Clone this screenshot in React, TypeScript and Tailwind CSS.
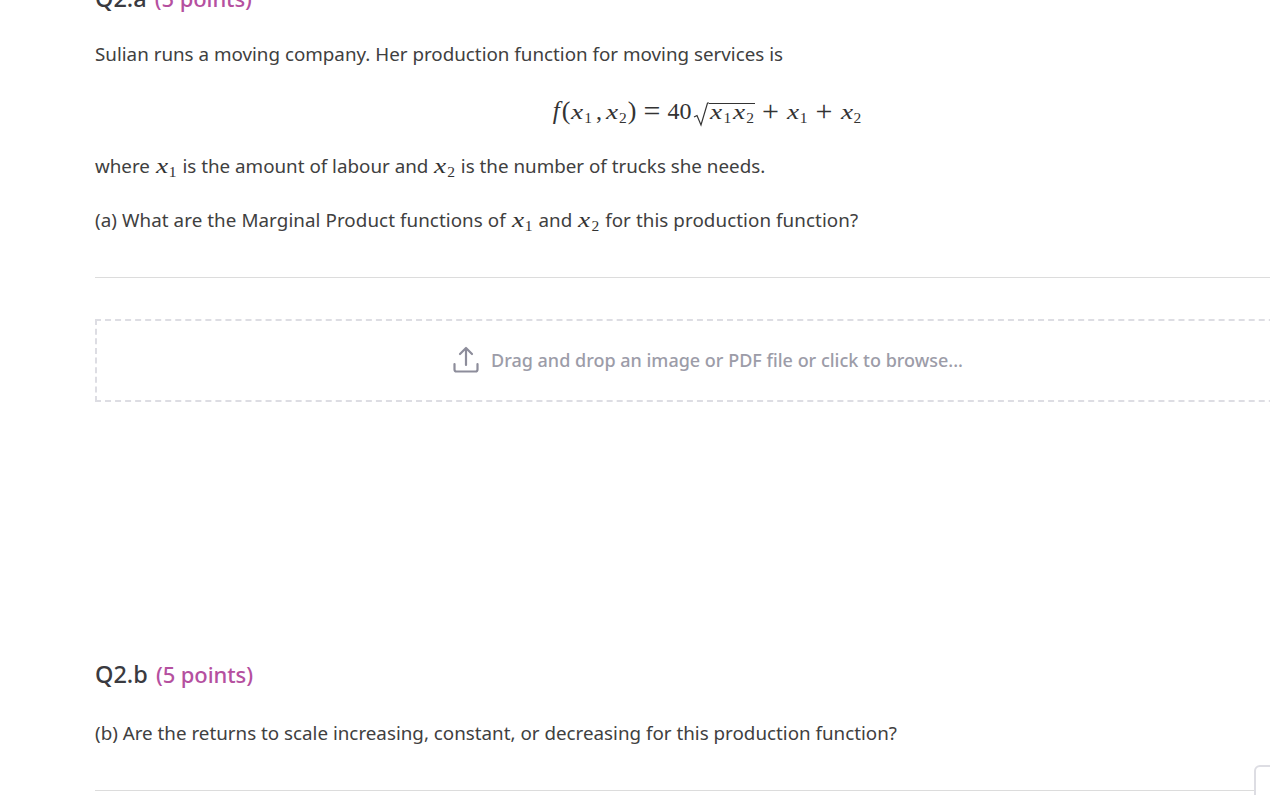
import React from 'react';

function X({ n }: { n: number }) {
  return (
    <span className="inline-block leading-none mx-[1px] font-['Liberation_Serif',serif] text-[#333]">
      <i className="inline-block w-[13px] origin-left scale-x-[1.3] text-[21px]">x</i>
      <span className="relative top-[4px] text-[15.5px]">{'' + n}</span>
    </span>
  );
}

function Heading({ label, points }: { label: string; points: string }) {
  return (
    <h2 className="h-[36px] leading-[36px] text-[23.5px] font-medium text-[#3a3a40]">
      {label} <span className="ml-[2px] text-[22px] tracking-[-0.1px] text-[#b5509f]">{points}</span>
    </h2>
  );
}

export default function App() {
  return (
    <div className="relative h-[795px] w-[1270px] overflow-hidden bg-white text-[18.8px] leading-[28px] text-[#404040] font-['Noto_Sans','Open_Sans',sans-serif]">
      <div className="w-[1300px] pl-[95px] -mt-[20px]">
        <Heading label="Q2.a" points="(5 points)" />

        <p className="mt-[24px]">Sulian runs a moving company. Her production function for moving services is</p>

        {/* Display equation */}
        <div className="mt-[29px] h-[28px] w-[1225px] flex justify-center items-center font-['Liberation_Serif',serif] text-[24px] text-[#333]">
          <span className="whitespace-nowrap flex items-center">
            <i className="mr-[2px] text-[25px]">f</i>
            <span className="text-[26px]">(</span>
            <X n={1} />
            <span className="mx-[3px]">,</span>
            <X n={2} />
            <span className="text-[26px]">)</span>
            <span className="mx-[7px] text-[30px] leading-none">=</span>
            <span>40</span>
            <svg className="relative top-[3px]" width="18" height="26" viewBox="0 0 18 26">
              <path d="M3 16 L6 14.5 L10 24 L16.5 2 L18 2" fill="none" stroke="#333" strokeWidth="1.2" />
            </svg>
            <span className="relative leading-none">
              <span className="absolute left-0 right-0 top-[4px] h-px bg-[#333]" />
              <X n={1} />
              <X n={2} />
            </span>
            <span className="mx-[7px] text-[30px] leading-none">+</span>
            <X n={1} />
            <span className="mx-[7px] text-[30px] leading-none">+</span>
            <X n={2} />
          </span>
        </div>

        <p className="mt-[27px]">
          where <X n={1} /> is the amount of labour and <X n={2} /> is the number of trucks she needs.
        </p>

        <p className="mt-[26px] tracking-[0.07px]">
          (a) What are the Marginal Product functions of <X n={1} /> and <X n={2} /> for this production function?
        </p>

        <hr className="mt-[43px] border-t border-[#dcdcdc]" />

        {/* Upload dropzone */}
        <div className="mt-[41px] h-[83px] w-[1250px] border-2 border-dashed border-[#dddde3] flex items-center justify-center pr-[25px]">
          <div className="flex items-center gap-[11px] pb-[2px] text-[18px] font-medium text-[#9c9ca8]">
            <svg width="28" height="28" viewBox="0 0 28 28" fill="none" stroke="#8d8d9b" strokeWidth="2.2" strokeLinecap="round" strokeLinejoin="round">
              <path d="M14 19V2M8 8l6-6 6 6" />
              <path d="M2.5 18v5.5a2 2 0 0 0 2 2h19a2 2 0 0 0 2-2V18" />
            </svg>
            <span>Drag and drop an image or PDF file or click to browse...</span>
          </div>
        </div>

        <div className="mt-[254px]">
          <Heading label="Q2.b" points="(5 points)" />
        </div>

        <p className="mt-[27px]">(b) Are the returns to scale increasing, constant, or decreasing for this production function?</p>

        <hr className="mt-[43px] border-t border-[#dcdcdc]" />
      </div>

      {/* Corner of the floating panel */}
      <div className="absolute left-[1254px] top-[765px] h-[60px] w-[60px] rounded-tl-[6px] border-2 border-[#dddde3] bg-white" />
    </div>
  );
}
